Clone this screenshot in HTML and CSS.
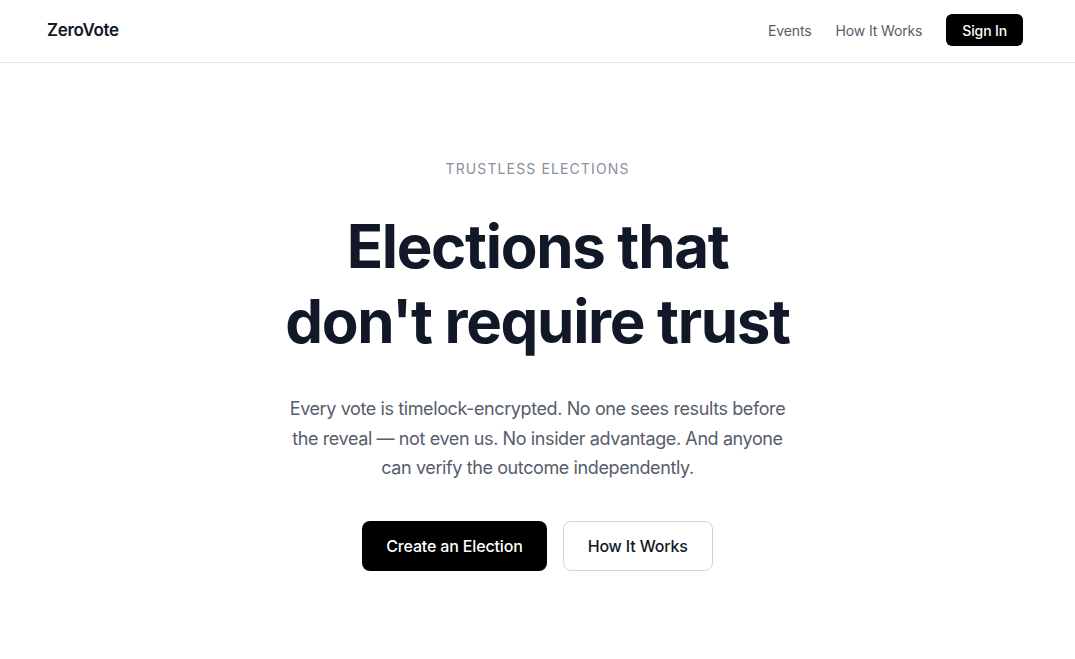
FILE: index.html
```html
<!DOCTYPE html>
<html lang="en">
<head>
    <meta charset="UTF-8">
    <meta name="viewport" content="width=device-width, initial-scale=1.0">
    <title>ZeroVote</title>
    <link rel="stylesheet" href="styles.css">
</head>
<body>
    <header class="site-header">
        <div class="header-inner">
            <a class="logo" href="#">ZeroVote</a>
            <nav class="nav">
                <a href="#">Events</a>
                <a href="#">How It Works</a>
                <a class="btn-signin" href="#">Sign In</a>
            </nav>
        </div>
    </header>

    <main class="hero">
        <div class="eyebrow">Trustless Elections</div>
        <h1 class="headline">Elections that<br>don't require trust</h1>
        <p class="lead">Every vote is timelock-encrypted. No one sees results before the reveal — not even us. No insider advantage. And anyone can verify the outcome independently.</p>
        <div class="actions">
            <a class="btn btn-primary" href="#">Create an Election</a>
            <a class="btn btn-outline" href="#">How It Works</a>
        </div>
    </main>
</body>
</html>
```

FILE: styles.css
```css
:root {
    --text-dark: #111827;
    --text-muted: #565d6b;
    --text-light: #8b909c;
    --border-color: #e5e7eb;
}
* {
    box-sizing: border-box;
}
body {
    margin: 0;
    font-family: Inter, "Noto Sans", sans-serif;
    background: #fff;
    color: var(--text-dark);
}
a {
    text-decoration: none;
    color: inherit;
}
.site-header {
    border-bottom: 1px solid var(--border-color);
}
.header-inner {
    height: 62px;
    display: flex;
    align-items: center;
    justify-content: space-between;
    padding: 0 52px 2px 47px;
}
.logo {
    font-size: 17px;
    font-weight: 600;
    letter-spacing: -0.02em;
    color: var(--text-dark);
}
.nav {
    display: flex;
    align-items: center;
    gap: 24px;
    font-size: 14px;
    letter-spacing: -0.01em;
    color: var(--text-muted);
}
.btn-signin {
    background: #000;
    color: #fff;
    font-weight: 500;
    height: 32px;
    padding: 0 16px;
    border-radius: 6px;
    display: flex;
    align-items: center;
}
.hero {
    display: flex;
    flex-direction: column;
    align-items: center;
    text-align: center;
    padding-top: 96px;
}
.eyebrow {
    font-size: 14px;
    line-height: 20px;
    letter-spacing: 0.08em;
    text-transform: uppercase;
    color: var(--text-light);
}
.headline {
    margin: 30px 0 0;
    font-size: 60px;
    line-height: 75px;
    font-weight: 700;
    letter-spacing: -0.022em;
    color: var(--text-dark);
}
.lead {
    margin: 35px 0 0;
    max-width: 510px;
    font-size: 18px;
    line-height: 29.5px;
    letter-spacing: -0.022em;
    color: var(--text-muted);
}
.actions {
    display: flex;
    gap: 16px;
    margin-top: 38px;
}
.btn {
    height: 50px;
    padding: 0 24px;
    border-radius: 8px;
    font-size: 16px;
    font-weight: 500;
    letter-spacing: -0.01em;
    display: flex;
    align-items: center;
}
.btn-primary {
    background: #000;
    color: #fff;
}
.btn-outline {
    border: 1px solid #d1d5db;
    color: var(--text-dark);
}
```
